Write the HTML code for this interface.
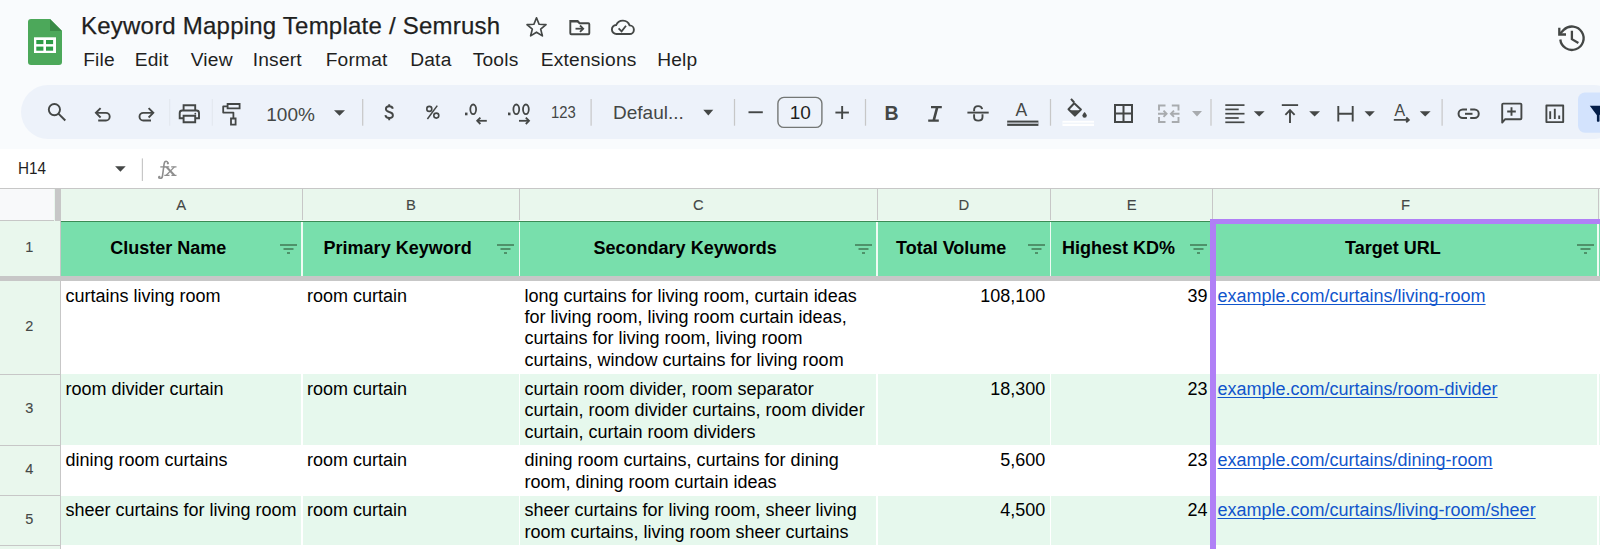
<!DOCTYPE html>
<html><head><meta charset="utf-8"><style>
html,body{margin:0;padding:0;width:1600px;height:549px;overflow:hidden;background:#f9fbfd;}
body{position:relative;font-family:"Liberation Sans",sans-serif;}
div,svg{position:absolute;box-sizing:border-box;}
.t{white-space:pre;}
</style></head><body>
<div style="left:0px;top:0px;width:1600px;height:549px;background:#f9fbfd;"></div>
<svg style="position:absolute;left:28px;top:19px;" width="34" height="46" viewBox="0 0 34 46">
<path d="M3 0 H22 L34 12 V43 a3 3 0 0 1 -3 3 H3 a3 3 0 0 1 -3 -3 V3 a3 3 0 0 1 3 -3z" fill="#4ca85a"/>
<path d="M22 0 L34 12 H22z" fill="#3a8b47"/>
<rect x="6" y="18.3" width="22" height="15.7" fill="#fff"/>
<rect x="8.3" y="21" width="7.1" height="4.1" fill="#2e9c48"/><rect x="18" y="21" width="7.1" height="4.1" fill="#2e9c48"/>
<rect x="8.3" y="27.6" width="7.1" height="4.1" fill="#2e9c48"/><rect x="18" y="27.6" width="7.1" height="4.1" fill="#2e9c48"/>
</svg>
<div class="t" style="left:81px;top:13.88px;font-size:24px;line-height:24px;font-weight:400;color:#1f1f1f;letter-spacing:0.22px;-webkit-text-stroke:0.25px #1f1f1f;">Keyword Mapping Template / Semrush</div>
<div class="t" style="left:83.2px;top:49.65px;font-size:19.2px;line-height:19.2px;font-weight:400;color:#1f1f1f;letter-spacing:0.2px;">File</div>
<div class="t" style="left:134.7px;top:49.65px;font-size:19.2px;line-height:19.2px;font-weight:400;color:#1f1f1f;letter-spacing:0.2px;">Edit</div>
<div class="t" style="left:190.7px;top:49.65px;font-size:19.2px;line-height:19.2px;font-weight:400;color:#1f1f1f;letter-spacing:0.2px;">View</div>
<div class="t" style="left:252.7px;top:49.65px;font-size:19.2px;line-height:19.2px;font-weight:400;color:#1f1f1f;letter-spacing:0.2px;">Insert</div>
<div class="t" style="left:325.7px;top:49.65px;font-size:19.2px;line-height:19.2px;font-weight:400;color:#1f1f1f;letter-spacing:0.2px;">Format</div>
<div class="t" style="left:410.2px;top:49.65px;font-size:19.2px;line-height:19.2px;font-weight:400;color:#1f1f1f;letter-spacing:0.2px;">Data</div>
<div class="t" style="left:472.7px;top:49.65px;font-size:19.2px;line-height:19.2px;font-weight:400;color:#1f1f1f;letter-spacing:0.2px;">Tools</div>
<div class="t" style="left:540.7px;top:49.65px;font-size:19.2px;line-height:19.2px;font-weight:400;color:#1f1f1f;letter-spacing:0.2px;">Extensions</div>
<div class="t" style="left:657.2px;top:49.65px;font-size:19.2px;line-height:19.2px;font-weight:400;color:#1f1f1f;letter-spacing:0.2px;">Help</div>
<div style="left:21px;top:85px;width:1600px;height:54px;background:#edf2fa;border-radius:27px;"></div>
<div style="left:0px;top:149px;width:1600px;height:39px;background:#ffffff;"></div>
<div class="t" style="left:17.6px;top:160.21px;font-size:17px;line-height:17px;font-weight:400;color:#1f1f1f;transform:scaleX(0.9);transform-origin:0 0;">H14</div>
<div style="left:0px;top:188px;width:1600px;height:33px;background:#e9f7ed;"></div>
<div style="left:0px;top:188px;width:54px;height:33px;background:#f8f9fa;"></div>
<div style="left:0px;top:188px;width:1600px;height:1px;background:#c7c7c7;"></div>
<div style="left:0px;top:221px;width:60px;height:328px;background:#e9f7ed;"></div>
<div style="left:60px;top:221px;width:1540px;height:55.2px;background:#78dfac;"></div>
<div style="left:60px;top:219.6px;width:1540px;height:1px;background:#f4fbf6;"></div>
<div style="left:60px;top:220.6px;width:1540px;height:1.1px;background:#3b8a55;"></div>
<div style="left:54.5px;top:188px;width:6.2px;height:33px;background:#c7c7c7;"></div>
<div style="left:0px;top:276.1px;width:1600px;height:4.9px;background:#c7c7c7;"></div>
<div style="left:60px;top:281px;width:1540px;height:93px;background:#ffffff;"></div>
<div style="left:60px;top:374px;width:1540px;height:71px;background:#e6f8ed;"></div>
<div style="left:60px;top:445px;width:1540px;height:51px;background:#ffffff;"></div>
<div style="left:60px;top:496px;width:1540px;height:49px;background:#e6f8ed;"></div>
<div style="left:60px;top:545px;width:1540px;height:4px;background:#ffffff;"></div>
<div style="left:0px;top:373.5px;width:60px;height:1px;background:#c7c7c7;"></div>
<div style="left:0px;top:445px;width:60px;height:1px;background:#c7c7c7;"></div>
<div style="left:0px;top:495px;width:60px;height:1px;background:#c7c7c7;"></div>
<div style="left:0px;top:545px;width:60px;height:1px;background:#c7c7c7;"></div>
<div style="left:0px;top:220px;width:54px;height:1px;background:#c7c7c7;"></div>
<div style="left:59.5px;top:221px;width:1px;height:328px;background:#c7c7c7;"></div>
<div style="left:301.5px;top:189px;width:1px;height:31px;background:#c7c7c7;"></div>
<div style="left:301.4px;top:221.7px;width:1.3px;height:54.4px;background:#f0fbf4;"></div>
<div style="left:519.0px;top:189px;width:1px;height:31px;background:#c7c7c7;"></div>
<div style="left:518.9px;top:221.7px;width:1.3px;height:54.4px;background:#f0fbf4;"></div>
<div style="left:876.5px;top:189px;width:1px;height:31px;background:#c7c7c7;"></div>
<div style="left:876.4px;top:221.7px;width:1.3px;height:54.4px;background:#f0fbf4;"></div>
<div style="left:1050.0px;top:189px;width:1px;height:31px;background:#c7c7c7;"></div>
<div style="left:1049.9px;top:221.7px;width:1.3px;height:54.4px;background:#f0fbf4;"></div>
<div style="left:1212.0px;top:189px;width:1px;height:31px;background:#c7c7c7;"></div>
<div style="left:1211.9px;top:221.7px;width:1.3px;height:54.4px;background:#f0fbf4;"></div>
<div style="left:1597.5px;top:189px;width:1px;height:31px;background:#c7c7c7;"></div>
<div style="left:1597.4px;top:221.7px;width:1.3px;height:54.4px;background:#f0fbf4;"></div>
<div style="left:301.4px;top:374px;width:1.2px;height:71px;background:#ffffff;"></div>
<div style="left:301.4px;top:496px;width:1.2px;height:49px;background:#ffffff;"></div>
<div style="left:518.9px;top:374px;width:1.2px;height:71px;background:#ffffff;"></div>
<div style="left:518.9px;top:496px;width:1.2px;height:49px;background:#ffffff;"></div>
<div style="left:876.4px;top:374px;width:1.2px;height:71px;background:#ffffff;"></div>
<div style="left:876.4px;top:496px;width:1.2px;height:49px;background:#ffffff;"></div>
<div style="left:1049.9px;top:374px;width:1.2px;height:71px;background:#ffffff;"></div>
<div style="left:1049.9px;top:496px;width:1.2px;height:49px;background:#ffffff;"></div>
<div style="left:1211.9px;top:374px;width:1.2px;height:71px;background:#ffffff;"></div>
<div style="left:1211.9px;top:496px;width:1.2px;height:49px;background:#ffffff;"></div>
<div style="left:1597.4px;top:374px;width:1.2px;height:71px;background:#ffffff;"></div>
<div style="left:1597.4px;top:496px;width:1.2px;height:49px;background:#ffffff;"></div>
<div class="t" style="left:181.2px;transform:translateX(-50%);top:197.67px;font-size:14.8px;line-height:14.8px;font-weight:400;color:#444746;-webkit-text-stroke:0.12px #444746;">A</div>
<div class="t" style="left:410.95px;transform:translateX(-50%);top:197.67px;font-size:14.8px;line-height:14.8px;font-weight:400;color:#444746;-webkit-text-stroke:0.12px #444746;">B</div>
<div class="t" style="left:698.45px;transform:translateX(-50%);top:197.67px;font-size:14.8px;line-height:14.8px;font-weight:400;color:#444746;-webkit-text-stroke:0.12px #444746;">C</div>
<div class="t" style="left:963.95px;transform:translateX(-50%);top:197.67px;font-size:14.8px;line-height:14.8px;font-weight:400;color:#444746;-webkit-text-stroke:0.12px #444746;">D</div>
<div class="t" style="left:1131.7px;transform:translateX(-50%);top:197.67px;font-size:14.8px;line-height:14.8px;font-weight:400;color:#444746;-webkit-text-stroke:0.12px #444746;">E</div>
<div class="t" style="left:1405.45px;transform:translateX(-50%);top:197.67px;font-size:14.8px;line-height:14.8px;font-weight:400;color:#444746;-webkit-text-stroke:0.12px #444746;">F</div>
<div class="t" style="left:29.2px;transform:translateX(-50%);top:239.63px;font-size:14.5px;line-height:14.5px;font-weight:400;color:#444746;-webkit-text-stroke:0.1px #444746;">1</div>
<div class="t" style="left:29.2px;transform:translateX(-50%);top:318.88px;font-size:14.5px;line-height:14.5px;font-weight:400;color:#444746;-webkit-text-stroke:0.1px #444746;">2</div>
<div class="t" style="left:29.2px;transform:translateX(-50%);top:401.13px;font-size:14.5px;line-height:14.5px;font-weight:400;color:#444746;-webkit-text-stroke:0.1px #444746;">3</div>
<div class="t" style="left:29.2px;transform:translateX(-50%);top:461.63px;font-size:14.5px;line-height:14.5px;font-weight:400;color:#444746;-webkit-text-stroke:0.1px #444746;">4</div>
<div class="t" style="left:29.2px;transform:translateX(-50%);top:511.63px;font-size:14.5px;line-height:14.5px;font-weight:400;color:#444746;-webkit-text-stroke:0.1px #444746;">5</div>
<div class="t" style="left:110.3px;top:238.96px;font-size:18px;line-height:18px;font-weight:700;color:#000;">Cluster Name</div>
<div class="t" style="left:323.6px;top:238.96px;font-size:18px;line-height:18px;font-weight:700;color:#000;">Primary Keyword</div>
<div class="t" style="left:593.6px;top:238.96px;font-size:18px;line-height:18px;font-weight:700;color:#000;">Secondary Keywords</div>
<div class="t" style="left:896px;top:238.96px;font-size:18px;line-height:18px;font-weight:700;color:#000;">Total Volume</div>
<div class="t" style="left:1062px;top:238.96px;font-size:18px;line-height:18px;font-weight:700;color:#000;">Highest KD%</div>
<div class="t" style="left:1345px;top:238.96px;font-size:18px;line-height:18px;font-weight:700;color:#000;">Target URL</div>
<svg style="position:absolute;left:280px;top:243px;" width="17" height="12" viewBox="0 0 17 12"><rect x="0" y="1.2" width="17" height="1.6" fill="#467f5a"/><rect x="3.5" y="5.2" width="10" height="1.6" fill="#467f5a"/><rect x="7" y="9.2" width="3" height="1.6" fill="#467f5a"/></svg>
<svg style="position:absolute;left:497px;top:243px;" width="17" height="12" viewBox="0 0 17 12"><rect x="0" y="1.2" width="17" height="1.6" fill="#467f5a"/><rect x="3.5" y="5.2" width="10" height="1.6" fill="#467f5a"/><rect x="7" y="9.2" width="3" height="1.6" fill="#467f5a"/></svg>
<svg style="position:absolute;left:855px;top:243px;" width="17" height="12" viewBox="0 0 17 12"><rect x="0" y="1.2" width="17" height="1.6" fill="#467f5a"/><rect x="3.5" y="5.2" width="10" height="1.6" fill="#467f5a"/><rect x="7" y="9.2" width="3" height="1.6" fill="#467f5a"/></svg>
<svg style="position:absolute;left:1028px;top:243px;" width="17" height="12" viewBox="0 0 17 12"><rect x="0" y="1.2" width="17" height="1.6" fill="#467f5a"/><rect x="3.5" y="5.2" width="10" height="1.6" fill="#467f5a"/><rect x="7" y="9.2" width="3" height="1.6" fill="#467f5a"/></svg>
<svg style="position:absolute;left:1190px;top:243px;" width="17" height="12" viewBox="0 0 17 12"><rect x="0" y="1.2" width="17" height="1.6" fill="#467f5a"/><rect x="3.5" y="5.2" width="10" height="1.6" fill="#467f5a"/><rect x="7" y="9.2" width="3" height="1.6" fill="#467f5a"/></svg>
<svg style="position:absolute;left:1577px;top:243px;" width="17" height="12" viewBox="0 0 17 12"><rect x="0" y="1.2" width="17" height="1.6" fill="#467f5a"/><rect x="3.5" y="5.2" width="10" height="1.6" fill="#467f5a"/><rect x="7" y="9.2" width="3" height="1.6" fill="#467f5a"/></svg>
<div class="t" style="left:65.5px;top:286.66px;font-size:18px;line-height:18px;font-weight:400;color:#000;">curtains living room</div>
<div class="t" style="left:65.5px;top:380.06px;font-size:18px;line-height:18px;font-weight:400;color:#000;">room divider curtain</div>
<div class="t" style="left:65.5px;top:451.36px;font-size:18px;line-height:18px;font-weight:400;color:#000;">dining room curtains</div>
<div class="t" style="left:65.5px;top:501.36px;font-size:18px;line-height:18px;font-weight:400;color:#000;">sheer curtains for living room</div>
<div class="t" style="left:307px;top:286.66px;font-size:18px;line-height:18px;font-weight:400;color:#000;">room curtain</div>
<div class="t" style="left:307px;top:380.06px;font-size:18px;line-height:18px;font-weight:400;color:#000;">room curtain</div>
<div class="t" style="left:307px;top:451.36px;font-size:18px;line-height:18px;font-weight:400;color:#000;">room curtain</div>
<div class="t" style="left:307px;top:501.36px;font-size:18px;line-height:18px;font-weight:400;color:#000;">room curtain</div>
<div class="t" style="left:524.5px;top:286.66px;font-size:18px;line-height:18px;font-weight:400;color:#000;">long curtains for living room, curtain ideas</div>
<div class="t" style="left:524.5px;top:308.06px;font-size:18px;line-height:18px;font-weight:400;color:#000;">for living room, living room curtain ideas,</div>
<div class="t" style="left:524.5px;top:329.46px;font-size:18px;line-height:18px;font-weight:400;color:#000;">curtains for living room, living room</div>
<div class="t" style="left:524.5px;top:350.86px;font-size:18px;line-height:18px;font-weight:400;color:#000;">curtains, window curtains for living room</div>
<div class="t" style="left:524.5px;top:380.06px;font-size:18px;line-height:18px;font-weight:400;color:#000;">curtain room divider, room separator</div>
<div class="t" style="left:524.5px;top:401.46px;font-size:18px;line-height:18px;font-weight:400;color:#000;">curtain, room divider curtains, room divider</div>
<div class="t" style="left:524.5px;top:422.86px;font-size:18px;line-height:18px;font-weight:400;color:#000;">curtain, curtain room dividers</div>
<div class="t" style="left:524.5px;top:451.36px;font-size:18px;line-height:18px;font-weight:400;color:#000;">dining room curtains, curtains for dining</div>
<div class="t" style="left:524.5px;top:472.76px;font-size:18px;line-height:18px;font-weight:400;color:#000;">room, dining room curtain ideas</div>
<div class="t" style="left:524.5px;top:501.36px;font-size:18px;line-height:18px;font-weight:400;color:#000;">sheer curtains for living room, sheer living</div>
<div class="t" style="left:524.5px;top:522.76px;font-size:18px;line-height:18px;font-weight:400;color:#000;">room curtains, living room sheer curtains</div>
<div class="t" style="right:554.8px;top:286.66px;font-size:18px;line-height:18px;font-weight:400;color:#000;">108,100</div>
<div class="t" style="right:554.8px;top:380.06px;font-size:18px;line-height:18px;font-weight:400;color:#000;">18,300</div>
<div class="t" style="right:554.8px;top:451.36px;font-size:18px;line-height:18px;font-weight:400;color:#000;">5,600</div>
<div class="t" style="right:554.8px;top:501.36px;font-size:18px;line-height:18px;font-weight:400;color:#000;">4,500</div>
<div class="t" style="right:392.4000000000001px;top:286.66px;font-size:18px;line-height:18px;font-weight:400;color:#000;">39</div>
<div class="t" style="right:392.4000000000001px;top:380.06px;font-size:18px;line-height:18px;font-weight:400;color:#000;">23</div>
<div class="t" style="right:392.4000000000001px;top:451.36px;font-size:18px;line-height:18px;font-weight:400;color:#000;">23</div>
<div class="t" style="right:392.4000000000001px;top:501.36px;font-size:18px;line-height:18px;font-weight:400;color:#000;">24</div>
<div class="t" style="left:1217.5px;top:286.66px;font-size:18px;line-height:18px;font-weight:400;color:#1155cc;text-decoration:underline;text-decoration-skip-ink:none;text-underline-offset:1.6px;">example.com/curtains/living-room</div>
<div class="t" style="left:1217.5px;top:380.06px;font-size:18px;line-height:18px;font-weight:400;color:#1155cc;text-decoration:underline;text-decoration-skip-ink:none;text-underline-offset:1.6px;">example.com/curtains/room-divider</div>
<div class="t" style="left:1217.5px;top:451.36px;font-size:18px;line-height:18px;font-weight:400;color:#1155cc;text-decoration:underline;text-decoration-skip-ink:none;text-underline-offset:1.6px;">example.com/curtains/dining-room</div>
<div class="t" style="left:1217.5px;top:501.36px;font-size:18px;line-height:18px;font-weight:400;color:#1155cc;text-decoration:underline;text-decoration-skip-ink:none;text-underline-offset:1.6px;">example.com/curtains/living-room/sheer</div>
<div style="left:1210px;top:218.7px;width:5.5px;height:331px;background:#b080f6;"></div>
<div style="left:1210px;top:218.7px;width:390px;height:5.4px;background:#b080f6;"></div>
<div class="t" style="left:266.3px;top:104.82px;font-size:19px;line-height:19px;font-weight:400;color:#444746;">100%</div>
<div class="t" style="left:551.3px;top:104.23px;font-size:16.5px;line-height:16.5px;font-weight:400;color:#444746;transform:scaleX(0.9);transform-origin:0 0;">123</div>
<div class="t" style="left:613px;top:102.62px;font-size:19px;line-height:19px;font-weight:400;color:#444746;">Defaul...</div>
<div class="t" style="left:789.7px;top:102.62px;font-size:19px;line-height:19px;font-weight:400;color:#1f1f1f;">10</div>
<div class="t" style="left:884.6px;top:104.09px;font-size:19.5px;line-height:19.5px;font-weight:700;color:#444746;">B</div>
<div class="t" style="left:1015.4px;top:102.19px;font-size:17.5px;line-height:17.5px;font-weight:400;color:#444746;">A</div>
<div class="t" style="left:1394.6px;top:103.06px;font-size:16px;line-height:16px;font-weight:400;color:#444746;">A</div>
<svg style="position:absolute;left:0;top:0" width="1600" height="549" viewBox="0 0 1600 549"><path d="M536.50 17.80 L539.09 24.24 L546.01 24.71 L540.68 29.16 L542.38 35.89 L536.50 32.20 L530.62 35.89 L532.32 29.16 L526.99 24.71 L533.91 24.24z" fill="none" stroke="#444746" stroke-width="1.7" stroke-linecap="butt" stroke-linejoin="round"/><path d="M570.3 21 H577.5 L579.5 23.2 H588.3 a1 1 0 0 1 1 1 V33.3 a1 1 0 0 1 -1 1 H571.3 a1 1 0 0 1 -1 -1z" fill="none" stroke="#444746" stroke-width="1.9" stroke-linecap="butt" stroke-linejoin="miter"/><path d="M570.3 20 H577.8 L580 22.5 H570.3z" fill="#444746"/><path d="M575.5 28.7 H583" fill="none" stroke="#444746" stroke-width="1.8" stroke-linecap="butt" stroke-linejoin="miter"/><path d="M580 25.5 L583.2 28.7 L580 31.9" fill="none" stroke="#444746" stroke-width="1.8" stroke-linecap="butt" stroke-linejoin="miter"/><path d="M616.6 34 H629.6 A4.3 4.3 0 0 0 629.6 25.4 A7.2 7.2 0 0 0 616.2 25.0 A4.5 4.5 0 0 0 616.6 34z" fill="none" stroke="#444746" stroke-width="1.9" stroke-linecap="butt" stroke-linejoin="miter"/><path d="M618.6 28.3 L621.6 31.3 L626 25.8" fill="none" stroke="#444746" stroke-width="1.8" stroke-linecap="butt" stroke-linejoin="miter"/><path d="M1560.3 39.5 A11.7 11.7 0 1 0 1563.7 29.9 L1560.2 33.5" fill="none" stroke="#444746" stroke-width="2.3" stroke-linecap="butt" stroke-linejoin="miter"/><path d="M1559.3 27.8 V34.5 H1566" fill="none" stroke="#444746" stroke-width="2.3" stroke-linecap="butt" stroke-linejoin="miter"/><path d="M1571.9 30.8 V39.2 L1578.4 43" fill="none" stroke="#444746" stroke-width="2.3" stroke-linecap="butt" stroke-linejoin="miter"/><circle cx="54.4" cy="109.6" r="5.6" fill="none" stroke="#444746" stroke-width="1.9"/><path d="M58.4 113.6 L65.3 120.5" fill="none" stroke="#444746" stroke-width="2" stroke-linecap="butt" stroke-linejoin="miter"/><path d="M96.5 112.85 H105.9 a3.8 3.8 0 0 1 0 7.6 H98.2" fill="none" stroke="#444746" stroke-width="1.9" stroke-linecap="butt" stroke-linejoin="miter"/><path d="M100.6 108.1 L95.9 112.85 L100.6 117.5" fill="none" stroke="#444746" stroke-width="1.9" stroke-linecap="butt" stroke-linejoin="miter"/><path d="M152.7 112.85 H143.3 a3.8 3.8 0 0 0 0 7.6 H151" fill="none" stroke="#444746" stroke-width="1.9" stroke-linecap="butt" stroke-linejoin="miter"/><path d="M148.6 108.1 L153.3 112.85 L148.6 117.5" fill="none" stroke="#444746" stroke-width="1.9" stroke-linecap="butt" stroke-linejoin="miter"/><rect x="169.2" y="99" width="1" height="26.7" fill="#e2e7ee"/><path d="M183.6 110.5 V105.3 H195.2 V110.5" fill="none" stroke="#444746" stroke-width="1.9" stroke-linecap="butt" stroke-linejoin="miter"/><path d="M183.6 118.2 H179.7 V113 a2.5 2.5 0 0 1 2.5 -2.5 H196.5 a2.5 2.5 0 0 1 2.5 2.5 V118.2 H195.2" fill="none" stroke="#444746" stroke-width="1.9" stroke-linecap="butt" stroke-linejoin="miter"/><path d="M183.6 115.8 H195.2 V122.2 H183.6z" fill="none" stroke="#444746" stroke-width="1.9" stroke-linecap="butt" stroke-linejoin="miter"/><circle cx="195.3" cy="113.7" r="0.9" fill="#444746"/><rect x="211.8" y="99" width="1" height="26.7" fill="#e2e7ee"/><path d="M227.6 104 H239.6 V108.4 H227.6z" fill="none" stroke="#444746" stroke-width="1.8" stroke-linecap="butt" stroke-linejoin="miter"/><path d="M227.2 106.4 H223.2 V112.6 H233.4 V118.5" fill="none" stroke="#444746" stroke-width="1.8" stroke-linecap="butt" stroke-linejoin="round"/><path d="M231 118.5 H235.6 V124.6 H231z" fill="none" stroke="#444746" stroke-width="1.8" stroke-linecap="butt" stroke-linejoin="miter"/><path d="M334 110.3 H345 L339.5 115.8z" fill="#444746"/><rect x="362.09999999999997" y="99" width="1.2" height="26.700000000000003" fill="#c7c7c7"/><path d="M392.8 108.8 C392.5 107.2 391 106.3 389.2 106.3 C387.2 106.3 385.9 107.4 385.9 109 C385.9 110.8 387.5 111.5 389.3 112 C391.3 112.5 392.9 113.3 392.9 115.2 C392.9 116.9 391.4 118 389.2 118 C387 118 385.6 116.9 385.4 115.2" fill="none" stroke="#444746" stroke-width="1.9" stroke-linecap="butt" stroke-linejoin="miter"/><path d="M389.2 104.2 V106.5 M389.2 117.8 V120.2" fill="none" stroke="#444746" stroke-width="1.9" stroke-linecap="butt" stroke-linejoin="miter"/><circle cx="429.3" cy="108.9" r="2.5" fill="none" stroke="#444746" stroke-width="1.6"/><circle cx="436.3" cy="115.6" r="2.5" fill="none" stroke="#444746" stroke-width="1.6"/><path d="M437.3 105.6 L427.4 119" fill="none" stroke="#444746" stroke-width="1.5" stroke-linecap="butt" stroke-linejoin="miter"/><path d="M465 112.6 h2.5 v2.7 h-2.5z" fill="#444746"/><ellipse cx="473.2" cy="109.3" rx="2.9" ry="4.8" fill="none" stroke="#444746" stroke-width="1.8"/><path d="M486.8 120.8 H477" fill="none" stroke="#444746" stroke-width="1.8" stroke-linecap="butt" stroke-linejoin="miter"/><path d="M480.4 117.6 L477.2 120.8 L480.4 124" fill="none" stroke="#444746" stroke-width="1.8" stroke-linecap="butt" stroke-linejoin="miter"/><path d="M508 112.6 h2.5 v2.7 h-2.5z" fill="#444746"/><ellipse cx="516.3" cy="109.3" rx="2.9" ry="4.8" fill="none" stroke="#444746" stroke-width="1.8"/><ellipse cx="525.9" cy="109.3" rx="2.9" ry="4.8" fill="none" stroke="#444746" stroke-width="1.8"/><path d="M519 120.8 H529" fill="none" stroke="#444746" stroke-width="1.8" stroke-linecap="butt" stroke-linejoin="miter"/><path d="M525.8 117.6 L529 120.8 L525.8 124" fill="none" stroke="#444746" stroke-width="1.8" stroke-linecap="butt" stroke-linejoin="miter"/><rect x="590.5" y="99" width="1.2" height="26.700000000000003" fill="#c7c7c7"/><path d="M703.3 109.8 H713.3 L708.3 115.6z" fill="#444746"/><rect x="733.9" y="99" width="1.2" height="26.700000000000003" fill="#c7c7c7"/><rect x="748.5" y="111.3" width="14.3" height="1.9" fill="#444746"/><rect x="777.9" y="97.4" width="44" height="30" rx="6" fill="none" stroke="#747775" stroke-width="1.4"/><rect x="835.4" y="111.6" width="13.5" height="1.9" fill="#444746"/><rect x="841.2" y="106" width="1.9" height="13" fill="#444746"/><rect x="864.9" y="99" width="1.2" height="26.700000000000003" fill="#c7c7c7"/><path d="M931 106 H941.8 V108.3 H938.3 L935.3 119.5 H938.8 V121.8 H928.2 V119.5 H932.6 L935.6 108.3 H931z" fill="#444746"/><path d="M967.4 112.6 H988.7" fill="none" stroke="#444746" stroke-width="1.9" stroke-linecap="butt" stroke-linejoin="miter"/><path d="M974.1 111.2 V110 C974.1 107.6 975.9 106.1 978.1 106.1 C980.3 106.1 981.9 107.4 982.1 109.2" fill="none" stroke="#444746" stroke-width="1.9" stroke-linecap="butt" stroke-linejoin="miter"/><path d="M974.1 114.3 V116.9 C974.1 119.3 975.9 120.6 978.3 120.6 C980.7 120.6 982.5 119.3 982.5 116.9 V114.3" fill="none" stroke="#444746" stroke-width="1.9" stroke-linecap="butt" stroke-linejoin="miter"/><rect x="1007.2" y="120.6" width="31.2" height="5.3" fill="#444746"/><rect x="1007.2" y="122.5" width="31.2" height="1.3" fill="#edf2fa" opacity="0.85"/><rect x="1049.9" y="99" width="1.2" height="26.700000000000003" fill="#c7c7c7"/><path d="M1071 98.8 L1074.2 102.5" fill="none" stroke="#444746" stroke-width="2" stroke-linecap="butt" stroke-linejoin="miter"/><path d="M1074.2 103.3 L1080.9 109.6 L1074.9 115.6 L1068.5 109.2z" fill="none" stroke="#444746" stroke-width="2" stroke-linecap="butt" stroke-linejoin="round"/><path d="M1069.5 110.2 H1080 L1074.9 115.3z" fill="#444746"/><path d="M1084.6 112 c0 0 -2.2 2.4 -2.2 3.6 a2.2 2.2 0 0 0 4.4 0 c0 -1.2 -2.2 -3.6 -2.2 -3.6z" fill="#444746"/><rect x="1062.5" y="120.8" width="31.5" height="5.2" fill="#ffffff"/><rect x="1062.5" y="122.6" width="31.5" height="1.3" fill="#edf2fa" opacity="0.8"/><path d="M1115 105 H1132 V122 H1115z" fill="none" stroke="#444746" stroke-width="2" stroke-linecap="butt" stroke-linejoin="miter"/><path d="M1123.5 105 V122 M1115 113.5 H1132" fill="none" stroke="#444746" stroke-width="2" stroke-linecap="butt" stroke-linejoin="miter"/><path d="M1165.5 105.5 H1159 V110.5 M1159 117 V122 H1165.5" fill="none" stroke="#a8abae" stroke-width="1.9" stroke-linecap="butt" stroke-linejoin="miter"/><path d="M1171.8 105.5 H1178.5 V110.5 M1178.5 117 V122 H1171.8" fill="none" stroke="#a8abae" stroke-width="1.9" stroke-linecap="butt" stroke-linejoin="miter"/><path d="M1158 113.7 H1166.5 M1163.5 110.6 L1166.6 113.7 L1163.5 116.8" fill="none" stroke="#a8abae" stroke-width="1.9" stroke-linecap="butt" stroke-linejoin="miter"/><path d="M1179.5 113.7 H1171 M1174 110.6 L1170.9 113.7 L1174 116.8" fill="none" stroke="#a8abae" stroke-width="1.9" stroke-linecap="butt" stroke-linejoin="miter"/><path d="M1192 111 H1202 L1197.0 116.5z" fill="#a8abae"/><rect x="1210.4" y="99" width="1.2" height="26.700000000000003" fill="#c7c7c7"/><rect x="1225.3" y="104.25" width="19.200000000000045" height="1.7" fill="#444746"/><rect x="1225.3" y="108.55000000000001" width="13.400000000000091" height="1.7" fill="#444746"/><rect x="1225.3" y="112.85000000000001" width="19.200000000000045" height="1.7" fill="#444746"/><rect x="1225.3" y="117.15" width="13.400000000000091" height="1.7" fill="#444746"/><rect x="1225.3" y="121.45" width="19.200000000000045" height="1.7" fill="#444746"/><path d="M1253.8 111.3 H1264.6 L1259.1999999999998 116.6z" fill="#444746"/><rect x="1281.8" y="104.2" width="16.3" height="1.8" fill="#444746"/><path d="M1290 110.5 V123 M1285.4 114.8 L1290 110.2 L1294.6 114.8" fill="none" stroke="#444746" stroke-width="1.9" stroke-linecap="butt" stroke-linejoin="miter"/><path d="M1309.2 111.3 H1320 L1314.6 116.6z" fill="#444746"/><path d="M1338.3 106.1 V121.6 M1352.7 106.1 V121.6 M1338.3 113.7 H1352.7" fill="none" stroke="#444746" stroke-width="1.9" stroke-linecap="butt" stroke-linejoin="miter"/><path d="M1364.5 111.3 H1374.8 L1369.65 116.6z" fill="#444746"/><path d="M1393.8 119.9 H1408.5 M1406.2 117.5 L1408.8 119.9 L1406.2 122.3" fill="none" stroke="#444746" stroke-width="1.9" stroke-linecap="butt" stroke-linejoin="miter"/><path d="M1419.8 111.3 H1430.6 L1425.1999999999998 116.6z" fill="#444746"/><rect x="1441.5" y="99" width="1.2" height="26.700000000000003" fill="#c7c7c7"/><path d="M1467 109.5 H1462.8 a4.25 4.25 0 0 0 0 8.5 H1467" fill="none" stroke="#444746" stroke-width="2" stroke-linecap="butt" stroke-linejoin="miter"/><path d="M1470.2 109.5 H1474.5 a4.25 4.25 0 0 1 0 8.5 H1470.2" fill="none" stroke="#444746" stroke-width="2" stroke-linecap="butt" stroke-linejoin="miter"/><path d="M1465 113.8 H1472.5" fill="none" stroke="#444746" stroke-width="2" stroke-linecap="butt" stroke-linejoin="miter"/><path d="M1502.2 122.5 V104.6 a1 1 0 0 1 1 -1 H1520.4 a1 1 0 0 1 1 1 V118.2 a1 1 0 0 1 -1 1 H1505.2z" fill="none" stroke="#444746" stroke-width="1.9" stroke-linecap="butt" stroke-linejoin="round"/><path d="M1511.5 107.2 V115.8 M1507.2 111.5 H1515.8" fill="none" stroke="#444746" stroke-width="1.9" stroke-linecap="butt" stroke-linejoin="miter"/><path d="M1546.4 105.5 H1563.2 V122.1 H1546.4z" fill="none" stroke="#444746" stroke-width="1.9" stroke-linecap="butt" stroke-linejoin="round"/><path d="M1550.2 111.2 V119 M1554.8 108.8 V119 M1559.2 115.5 V119" fill="none" stroke="#444746" stroke-width="1.9" stroke-linecap="butt" stroke-linejoin="miter"/><rect x="1578" y="92.5" width="40" height="40.3" rx="7" fill="#d3e3fd"/><path d="M1589.8 105.8 H1606.8 L1599.5 115.2 V121 a0.8 0.8 0 0 1 -0.8 0.8 H1597.7 a0.8 0.8 0 0 1 -0.8 -0.8 V115.2z" fill="#041e49"/><path d="M115.1 166.2 H125.7 L120.4 171.8z" fill="#444746"/><rect x="141.8" y="158.4" width="1.2" height="22.6" fill="#c7c7c7"/><path d="M167.9 163.2 C167.7 161.8 167.1 161.2 166.2 161.2 C164.9 161.2 164.3 162.5 164.1 164 L162.5 175.8 C162.3 177.4 161.4 178.3 160.3 178.3 C159.4 178.3 158.7 177.7 158.7 176.9" fill="none" stroke="#8e8e8e" stroke-width="1.6" stroke-linecap="butt" stroke-linejoin="miter"/><circle cx="167.9" cy="163.3" r="1.15" fill="#8e8e8e"/><circle cx="159.3" cy="176.8" r="1.15" fill="#8e8e8e"/><path d="M160.3 166.9 H165.6" fill="none" stroke="#8e8e8e" stroke-width="1.3" stroke-linecap="butt" stroke-linejoin="miter"/><path d="M166.4 166.9 L174.3 175.3" fill="none" stroke="#8e8e8e" stroke-width="2.1" stroke-linecap="butt" stroke-linejoin="miter"/><path d="M174.4 166.9 L166.3 175.3" fill="none" stroke="#8e8e8e" stroke-width="1.3" stroke-linecap="butt" stroke-linejoin="miter"/><path d="M164.3 166.9 H169.2 M171.2 166.9 H176.5 M164.3 175.4 H169.5 M171.4 175.4 H176.5" fill="none" stroke="#8e8e8e" stroke-width="1.2" stroke-linecap="butt" stroke-linejoin="miter"/></svg>
</body></html>
